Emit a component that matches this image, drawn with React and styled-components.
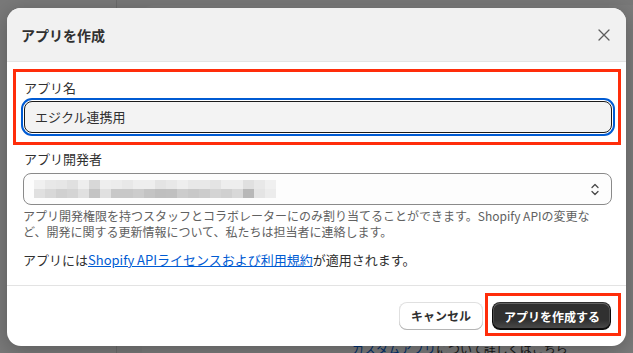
import React from 'react'
import styled, { createGlobalStyle } from 'styled-components'

const GlobalStyle = createGlobalStyle`
  html, body {
    margin: 0;
    padding: 0;
    background: #777;
  }
  body {
    font-family: "Noto Sans CJK JP", "Noto Sans", sans-serif;
    color: #303030;
  }
`

const Page = styled.div`
  position: relative;
  width: 633px;
  height: 353px;
  overflow: hidden;
  display: grid;
  grid-template-columns: 117px 1fr;
  background: #f1f1f1;
`

const Sidebar = styled.div`
  background: #f3f3f3;
  border-right: 1px solid #d6d6d6;
`

const Main = styled.div`
  padding: 5px 0 0 25px;
`

const BackCard = styled.div`
  height: 100%;
  background: #f6f6f6;
  border-top-left-radius: 12px;
  padding: 335px 0 0 210px;
  box-sizing: border-box;
  font-size: 12px;
  line-height: 18px;
  color: #303030;
  white-space: nowrap;
`

const BackLink = styled.a`
  color: #005bd3;
  text-decoration: underline;
`

const Overlay = styled.div`
  position: absolute;
  inset: 0;
  background: rgba(0, 0, 0, 0.5);
`

const Dialog = styled.div`
  position: absolute;
  left: 7px;
  top: 8px;
  width: 619px;
  height: 338px;
  background: #fff;
  border-radius: 14px;
  overflow: hidden;
  display: flex;
  flex-direction: column;
  box-shadow: 0 4px 20px rgba(0, 0, 0, 0.25);
`

const Header = styled.div`
  height: 53px;
  background: #f1f1f1;
  border-bottom: 1px solid #e3e3e3;
  display: flex;
  align-items: center;
  justify-content: space-between;
  padding: 0 15px 0 14px;
  flex-shrink: 0;
`

const Title = styled.h2`
  margin: 0;
  font-size: 14px;
  line-height: 20px;
  font-weight: 700;
  color: #303030;
`

const CloseButton = styled.button`
  border: 0;
  background: none;
  padding: 0;
  width: 14px;
  height: 14px;
  display: flex;
  align-items: center;
  justify-content: center;
  color: #5c5c5c;
`

const Body = styled.div`
  padding: 7px 5px 15px 6px;
  display: flex;
  flex-direction: column;
  border-bottom: 1px solid #e3e3e3;
`

const Highlight = styled.div`
  border: 3px solid #ff2d0a;
  padding: ${p => p.$pad};
`

const Field = styled.div`
  display: flex;
  flex-direction: column;
  padding: ${p => p.$pad || 0};
`

const Label = styled.label`
  font-size: 13px;
  line-height: 20px;
  color: #303030;
  padding-left: 1px;
  margin-bottom: ${p => p.$gap || 3}px;
`

const TextInput = styled.div`
  height: 32px;
  box-sizing: border-box;
  border: 1px solid #1a1a1a;
  border-radius: 8px;
  background: #f3f3f3;
  outline: 2px solid #005bd3;
  outline-offset: 1px;
  margin: 0 0 0 1px;
  display: flex;
  align-items: center;
  padding-left: 10px;
  font-size: 13px;
  line-height: 20px;
  color: #303030;
`

const Select = styled.div`
  height: 32px;
  box-sizing: border-box;
  border: 1px solid #8a8a8a;
  border-radius: 8px;
  background: #fdfdfd;
  display: flex;
  align-items: center;
  justify-content: space-between;
  padding: 0 12px 0 10px;
`

const Mosaic = styled.div`
  display: grid;
  grid-template-columns: repeat(22, 11px);
  grid-auto-rows: 9px;
`

const Cell = styled.span`
  background: ${p => p.$shade};
`

const HelpText = styled.p`
  margin: 3px 0 0;
  font-size: 12px;
  line-height: 16px;
  color: #616161;
  padding-right: 14px;
`

const Terms = styled.p`
  margin: 10px 0 0;
  font-size: 13px;
  line-height: 20px;
  color: #303030;
`

const TermsLink = styled.a`
  color: #005bd3;
  text-decoration: underline;
`

const Footer = styled.div`
  flex: 1;
  display: flex;
  justify-content: flex-end;
  align-items: center;
  gap: 2px;
  padding: 0 5px 3px 0;
`

const Button = styled.button`
  height: 28px;
  border: 0;
  border-radius: 8px;
  font-family: inherit;
  font-size: 12px;
  font-weight: 700;
  padding: 0 12px;
  white-space: nowrap;
  background: #fff;
  color: #303030;
  box-shadow: inset 0 -1px 0 0 #b5b5b5, inset 0 0 0 1px rgba(0, 0, 0, 0.12), inset 0 0.5px 0 1.5px #fff;
  margin-top: 2px;
`

const PrimaryButton = styled(Button)`
  width: 119px;
  margin-top: 0;
  color: #fff;
  background: linear-gradient(180deg, rgba(48, 48, 48, 0) 63%, rgba(255, 255, 255, 0.15) 100%), #303030;
  box-shadow: inset 0 -1px 0 1px rgba(0, 0, 0, 0.8), inset 0 0 0 1px #303030, inset 0 0.5px 0 1.5px rgba(255, 255, 255, 0.25);
`

const topRow = ['#f0f0f0','#e8e8e8','#e6e6e6','#e0e0e0','#eeeeee','#d8d8d8','#eeeeee','#ececec','#e8e8e8','#eeeeee','#eeeeee','#e4e4e4','#e8e8e8','#eeeeee','#e8e8e8','#e8e8e8','#e4e4e4','#eeeeee','#eeeeee','#e0e0e0','#e8e8e8','#f0f0f0']
const bottomRow = ['#e0e0e0','#d8d8d8','#d0d0d0','#d4d4d4','#e0e0e0','#c4c4c4','#e0e0e0','#c8c8c8','#c8c8c8','#cccccc','#c4c4c4','#bfbfbf','#c0c0c0','#cccccc','#c8c8c8','#cccccc','#d4d4d4','#d0d0d0','#d8d8d8','#b8b8b8','#e4e4e4','#ececec']

function App() {
  return (
    <>
      <GlobalStyle />
      <Page>
        <Sidebar />
        <Main>
          <BackCard>
            <BackLink>カスタムアプリ</BackLink>について詳しくはこちら
          </BackCard>
        </Main>
        <Overlay />
        <Dialog>
          <Header>
            <Title>アプリを作成</Title>
            <CloseButton aria-label="閉じる">
              <svg width="12" height="12" viewBox="0 0 12 12" fill="none" stroke="currentColor" strokeWidth="1.3" strokeLinecap="round">
                <path d="M1 1l10 10M11 1L1 11" />
              </svg>
            </CloseButton>
          </Header>
          <Body>
            <Highlight $pad="6px 6px 9px 7px">
              <Field>
                <Label $gap={3}>アプリ名</Label>
                <TextInput>エジクル連携用</TextInput>
              </Field>
            </Highlight>
            <Field $pad="4px 9px 0 10px">
              <Label $gap={4}>アプリ開発者</Label>
              <Select>
                <Mosaic>
                  {topRow.map((c, i) => <Cell key={'t' + i} $shade={c} />)}
                  {bottomRow.map((c, i) => <Cell key={'b' + i} $shade={c} />)}
                </Mosaic>
                <svg width="8" height="13" viewBox="0 0 8 13" fill="none" stroke="#4a4a4a" strokeWidth="1.3" strokeLinecap="round" strokeLinejoin="round">
                  <path d="M1 4.5L4 1.5L7 4.5M1 8.5L4 11.5L7 8.5" />
                </svg>
              </Select>
              <HelpText>
                アプリ開発権限を持つスタッフとコラボレーターにのみ割り当てることができます。Shopify APIの変更など、開発に関する更新情報について、私たちは担当者に連絡します。
              </HelpText>
              <Terms>
                アプリには<TermsLink>Shopify APIライセンスおよび利用規約</TermsLink>が適用されます。
              </Terms>
            </Field>
          </Body>
          <Footer>
            <Button>キャンセル</Button>
            <Highlight $pad="6px 7px 3px 4px">
              <PrimaryButton>アプリを作成する</PrimaryButton>
            </Highlight>
          </Footer>
        </Dialog>
      </Page>
    </>
  )
}

export default App
